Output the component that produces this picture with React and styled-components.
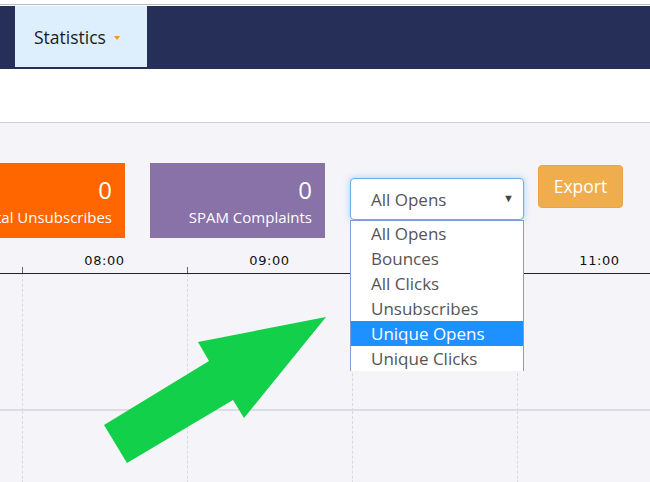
import React from 'react';
import styled, { createGlobalStyle } from 'styled-components';

const GlobalStyle = createGlobalStyle`
    html, body {
        margin: 0;
        overflow: hidden;
        background: #f4f4f9;
        font-family: "Open Sans", "Liberation Sans", sans-serif;
    }
`

const Page = styled.div`
    width: 650px;
    height: 482px;
    overflow: hidden;
    position: relative;
    background: #f4f4f9;
`

const TopRule = styled.div`
    height: 1px;
    background: #bdbdbd;
    border-top: 4px solid #fff;
    border-bottom: 1px solid #fff;
`

const Nav = styled.div`
    height: 63px;
    background: #252f57;
    padding-left: 15px;
    box-sizing: border-box;
    display: flex;
    align-items: flex-start;
`

const Tab = styled.div`
    height: 61px;
    width: 132px;
    box-sizing: border-box;
    padding-left: 19px;
    background: #ddeefc;
    display: flex;
    align-items: center;
    gap: 8px;
    font-size: 17.5px;
    color: #1c1c1c;
`

const Caret = styled.span`
    width: 0;
    height: 0;
    margin-top: 2px;
    border-left: 3.5px solid transparent;
    border-right: 3.5px solid transparent;
    border-top: 4px solid ${props => props.color};
`

const SubBar = styled.div`
    height: 53px;
    background: #fff;
    border-bottom: 1px solid #cfcfd4;
`

const Content = styled.div`
    padding-top: 40px;
`

const Toolbar = styled.div`
    display: flex;
    align-items: flex-start;
    margin-left: -50px;
`

const Card = styled.div`
    width: 175px;
    height: 75px;
    box-sizing: border-box;
    margin-right: 25px;
    padding: 15px 13px 0 0;
    background: ${props => props.bg};
    color: #fff;
    text-align: right;
`

const CardValue = styled.div`
    font-size: 24px;
    line-height: 1;
`

const CardLabel = styled.div`
    margin-top: 8px;
    font-size: 15px;
    line-height: 1;
    white-space: nowrap;
`

const SelectWrap = styled.div`
    position: relative;
    width: 174px;
    margin-top: 15px;
    margin-right: 14px;
`

const SelectBox = styled.div`
    height: 42px;
    box-sizing: border-box;
    border: 1px solid #66afe9;
    border-radius: 4px;
    box-shadow: 0 0 6px rgba(102, 175, 233, 0.55);
    background: #fff;
    padding: 0 9px 0 20px;
    display: flex;
    align-items: center;
    justify-content: space-between;
    font-size: 17px;
    color: #555;
`

const SelectArrow = styled.span`
    font-size: 11px;
    color: #444;
    margin-top: -3px;
`

const Menu = styled.ul`
    position: absolute;
    top: 42px;
    left: 0;
    width: 174px;
    height: 151px;
    box-sizing: border-box;
    margin: 0;
    padding: 0;
    list-style: none;
    overflow: hidden;
    background: #fff;
    border: 1px solid #7f9fd4;
    border-bottom: none;
    z-index: 2;
`

const MenuItem = styled.li`
    height: 25px;
    line-height: 25px;
    padding-left: 20px;
    font-size: 17px;
    color: ${props => props.active ? '#fff' : '#555'};
    background: ${props => props.active ? '#1e90ff' : 'transparent'};
    white-space: nowrap;
`

const ExportButton = styled.button`
    margin-top: 2px;
    width: 85px;
    height: 43px;
    border: 1px solid #eaa345;
    border-radius: 4px;
    background: #f0ad4e;
    color: #fff;
    font-family: "Open Sans", "Liberation Sans", sans-serif;
    font-size: 17.5px;
    padding: 0 0 2px;
`

const Chart = styled.div`
    display: flex;
    margin-top: 10px;
    margin-left: -143px;
`

const Column = styled.div`
    width: 165px;
    flex-shrink: 0;
`

const AxisLabel = styled.div`
    position: relative;
    height: 25px;
    line-height: 25px;
    text-align: center;
    font-family: "DejaVu Sans", Verdana, sans-serif;
    font-size: 13px;
    letter-spacing: 0.6px;
    color: #111;
    border-bottom: 1px solid #222;

    &::before {
        content: '';
        position: absolute;
        left: 0;
        bottom: 0;
        width: 1px;
        height: 6px;
        background: #666;
    }
`

const GridCell = styled.div`
    height: 135px;
    border-left: 1px dashed #dadade;
    border-bottom: 2px solid #dcdce2;
`

const Arrow = styled.svg`
    position: absolute;
    left: 100px;
    top: 310px;
`

const options = ['All Opens', 'Bounces', 'All Clicks', 'Unsubscribes', 'Unique Opens', 'Unique Clicks'];
const hours = ['', '08:00', '09:00', '10:00', '11:00'];

const App = () => {
    return (
        <Page>
            <GlobalStyle />
            <TopRule />
            <Nav>
                <Tab>
                    Statistics
                    <Caret color="#f7941d" />
                </Tab>
            </Nav>
            <SubBar />

            <Content>
                <Toolbar>
                    <Card bg="#ff6600">
                        <CardValue>0</CardValue>
                        <CardLabel>Total Unsubscribes</CardLabel>
                    </Card>
                    <Card bg="#8872a8">
                        <CardValue>0</CardValue>
                        <CardLabel>SPAM Complaints</CardLabel>
                    </Card>
                    <SelectWrap>
                        <SelectBox>
                            All Opens
                            <SelectArrow>▼</SelectArrow>
                        </SelectBox>
                        <Menu>
                            {options.map(o => (
                                <MenuItem key={o} active={o === 'Unique Opens'}>{o}</MenuItem>
                            ))}
                        </Menu>
                    </SelectWrap>
                    <ExportButton>Export</ExportButton>
                </Toolbar>

                <Chart>
                    {hours.map((h, i) => (
                        <Column key={i}>
                            <AxisLabel>{h}</AxisLabel>
                            <GridCell />
                            <GridCell />
                        </Column>
                    ))}
                </Chart>
            </Content>

            {/* green pointer arrow drawn over the chart */}
            <Arrow width="240" height="160" viewBox="0 0 240 160">
                <polygon
                    points="226,7 98,32 109,51 4,115 27,153 133,90 144,108"
                    fill="#12d04a"
                />
            </Arrow>
        </Page>
    )
}

export default App;
